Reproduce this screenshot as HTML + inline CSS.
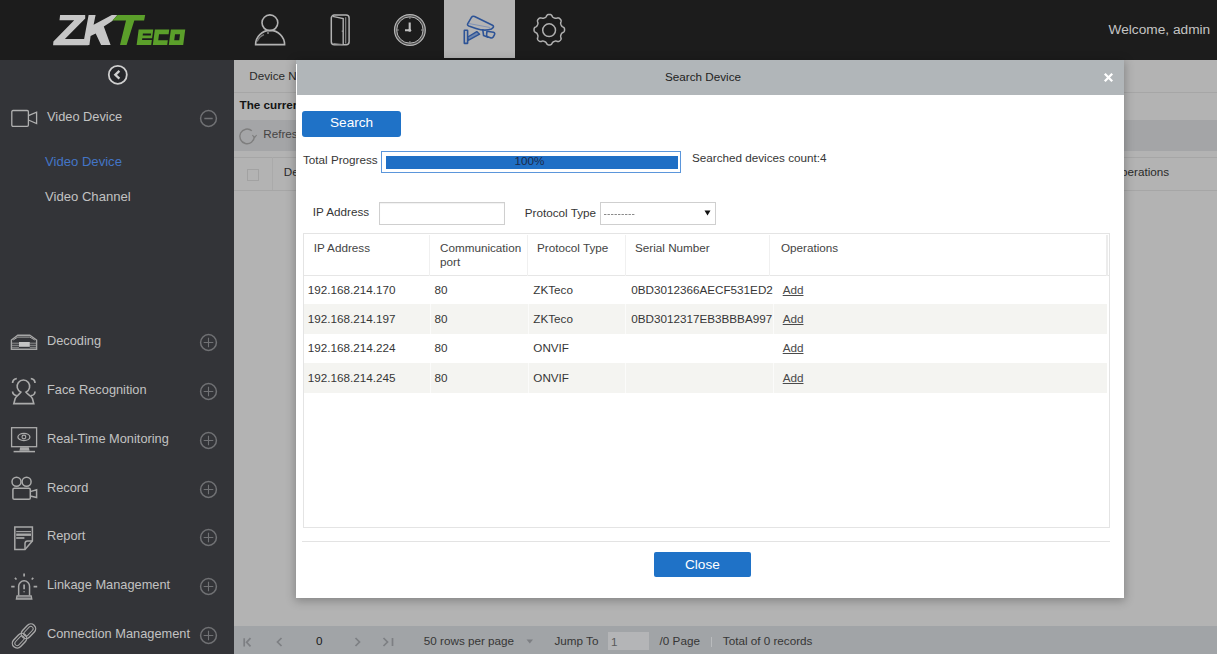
<!DOCTYPE html>
<html><head><meta charset="utf-8">
<style>
*{margin:0;padding:0;box-sizing:border-box}
html,body{width:1217px;height:654px;overflow:hidden;background:#b3b3b3;font-family:"Liberation Sans",sans-serif;position:relative}
.abs{position:absolute}
.t{position:absolute;white-space:nowrap;line-height:1}
svg{position:absolute;overflow:visible}
#hdr{left:0;top:0;width:1217px;height:60px;background:#1c1c1c}
#side{left:0;top:60px;width:234px;height:594px;background:#333438}
#main{left:234px;top:60px;width:983px;height:594px;background:#b3b3b3}
#dlg{left:296px;top:60px;width:828px;height:537.5px;background:#fff;box-shadow:0 2px 9px 1px rgba(0,0,0,0.26)}
#dhead{left:0;top:0;width:828px;height:35px;background:#b1b6b9}
.sl{font-size:12.8px;color:#cdcdcd}
.d12{font-size:11.7px;color:#222}
</style></head>
<body>
<!-- HEADER -->
<div id="hdr" class="abs">
  <svg width="1217" height="60" style="left:0;top:0">
    <g fill="#c6c6c6">
      <polygon points="60.1,14.9 85.2,14.9 85.2,18.5 64.9,39.1 89.2,39.1 88.3,45.2 53.1,45.2 53.4,41.6 74.2,20.3 59.5,20.3"/>
      <polygon points="88.6,14.9 95.6,14.9 93.6,24.8 111.8,14.9 117.3,14.9 112.3,21 103.8,26.5 110.6,45.1 101.1,45.1 95.7,33.4 90.6,36 89.4,45.1 83,45.1"/>
    </g>
    <g fill="#5b9f2a">
      <polygon points="117.6,14.9 145.2,14.9 144.1,20.5 134.3,20.5 126.6,44.9 120,44.9 126,20.5 112.3,20.5"/>
      <g transform="translate(0,45) skewX(-7.5) translate(0,-45)" fill-rule="evenodd">
        <path d="M136.6,29.4H151.2V38.3H141.4V40H151.2V44.9H136.6Z M141.4,33.6V35.5H149.6V33.6Z"/>
        <path d="M152.8,29.4H167.2V34.2H157.6V40.2H167.2V44.9H152.8Z"/>
        <path d="M168.8,29.4H183.2V44.9H168.8Z M173.6,34.2V40.2H178.6V34.2Z"/>
      </g>
    </g>
  </svg>
  <!-- person -->
  <svg width="40" height="40" style="left:250px;top:10px" fill="none" stroke="#b2b2b2" stroke-width="1.6">
    <circle cx="19.9" cy="12.8" r="7.9"/>
    <path d="M5.6,34.6 A14.5,14.2 0 0 1 34.6,34.6 Z"/>
    <path d="M7.2,31.5 A12.5,12 0 0 1 14,24.6" stroke-width="1.3" stroke="#7a7a7a"/>
    <circle cx="18" cy="22.9" r="1" fill="#8a8a8a" stroke="none"/>
  </svg>
  <!-- door -->
  <svg width="30" height="40" style="left:325px;top:10px" fill="none" stroke="#b2b2b2" stroke-width="1.5">
    <rect x="6.3" y="5.1" width="17.8" height="29.6" rx="3"/>
    <path d="M7.6,6.4 L18.2,8.6 V34.2" stroke-width="1.4"/>
    <path d="M20.7,7.2 V33.4" stroke-width="1.1" stroke="#8c8c8c"/>
    <path d="M8.4,33.6 L17.6,34.6" stroke-width="1.1" stroke="#8c8c8c"/>
    <circle cx="17.3" cy="21.1" r="0.7" fill="#b2b2b2" stroke="none"/>
  </svg>
  <!-- clock -->
  <svg width="40" height="40" style="left:390px;top:10px" fill="none" stroke="#b4b4b4">
    <circle cx="19.9" cy="20" r="14.3" stroke-width="2.4" stroke="#505050"/>
    <circle cx="19.9" cy="20" r="15.4" stroke-width="1.2"/>
    <circle cx="19.9" cy="20" r="13.2" stroke-width="1"/>
    <path d="M19.7,12.6 V20.3 H15" stroke-width="2.1" stroke="#c0c0c0"/>
    <circle cx="19.7" cy="20.3" r="1.5" fill="#c0c0c0" stroke="none"/>
    <path d="M19.9,7.2V8.8 M19.9,31.2V32.8 M7.1,20H8.7 M31.1,20H32.7" stroke-width="1.1"/>
  </svg>
  <div class="abs" style="left:444px;top:0;width:71px;height:58px;background:#b4b4b4"></div>
  <!-- camera -->
  <svg width="44" height="40" style="left:458px;top:10px" fill="none" stroke="#2d5396" stroke-width="1.6" stroke-linejoin="round" stroke-linecap="round">
    <rect x="6.3" y="20.2" width="3.3" height="13.2" rx="0.4"/>
    <path d="M9.8,27 L18.8,21.6 L21.6,24.2 L10.2,30.4 Z" fill="#6f86ad" stroke-width="1.4"/>
    <path d="M13.6,7.2 C14.3,6.2 15.5,6.1 16.6,6.6 L34.5,15.2 C35.6,15.8 35.8,16.8 35,17.6 L33.5,19 C29,20.6 23,20.2 18,18.4 L10.8,16 C9.5,15.5 9.2,14.6 9.8,13.6 Z"/>
    <path d="M11.2,13.6 L31.5,17.4" stroke-width="0.9" stroke="#7b8fb5"/>
    <path d="M24.8,19.8 L25.6,25.6 L30,27.2"/>
    <path d="M29,21.2 L35.4,22.3 C36.7,22.7 37.1,23.7 36.4,24.9 L35.2,27 C34.4,28 33.4,28.2 32.4,27.8 L29.6,26.8 C28.6,26.3 28.4,25.4 28.6,24.4 Z"/>
  </svg>
  <!-- gear -->
  <svg width="40" height="40" style="left:529px;top:10px" fill="none" stroke="#b0b0b0" stroke-width="1.5" stroke-linejoin="round">
    <path d="M35.55,19.70 L35.54,20.10 L35.50,20.50 L35.42,20.89 L35.29,21.28 L35.07,21.64 L34.74,21.99 L34.29,22.29 L33.77,22.56 L33.31,22.82 L32.95,23.09 L32.70,23.37 L32.51,23.67 L32.35,23.97 L32.21,24.27 L32.08,24.58 L31.95,24.89 L31.84,25.20 L31.73,25.53 L31.66,25.87 L31.64,26.25 L31.71,26.69 L31.85,27.20 L32.02,27.76 L32.13,28.29 L32.12,28.77 L32.01,29.18 L31.83,29.55 L31.61,29.88 L31.36,30.19 L31.08,30.48 L30.79,30.76 L30.48,31.01 L30.15,31.23 L29.78,31.41 L29.37,31.52 L28.89,31.53 L28.36,31.42 L27.80,31.25 L27.29,31.11 L26.85,31.04 L26.47,31.06 L26.13,31.13 L25.80,31.24 L25.49,31.35 L25.18,31.48 L24.87,31.61 L24.57,31.75 L24.27,31.91 L23.97,32.10 L23.69,32.35 L23.42,32.71 L23.16,33.17 L22.89,33.69 L22.59,34.14 L22.24,34.47 L21.88,34.69 L21.49,34.82 L21.10,34.90 L20.70,34.94 L20.30,34.95 L19.90,34.94 L19.50,34.90 L19.11,34.82 L18.72,34.69 L18.36,34.47 L18.01,34.14 L17.71,33.69 L17.44,33.17 L17.18,32.71 L16.91,32.35 L16.63,32.10 L16.33,31.91 L16.03,31.75 L15.73,31.61 L15.42,31.48 L15.11,31.35 L14.80,31.24 L14.47,31.13 L14.13,31.06 L13.75,31.04 L13.31,31.11 L12.80,31.25 L12.24,31.42 L11.71,31.53 L11.23,31.52 L10.82,31.41 L10.45,31.23 L10.12,31.01 L9.81,30.76 L9.52,30.48 L9.24,30.19 L8.99,29.88 L8.77,29.55 L8.59,29.18 L8.48,28.77 L8.47,28.29 L8.58,27.76 L8.75,27.20 L8.89,26.69 L8.96,26.25 L8.94,25.87 L8.87,25.53 L8.76,25.20 L8.65,24.89 L8.52,24.58 L8.39,24.27 L8.25,23.97 L8.09,23.67 L7.90,23.37 L7.65,23.09 L7.29,22.82 L6.83,22.56 L6.31,22.29 L5.86,21.99 L5.53,21.64 L5.31,21.28 L5.18,20.89 L5.10,20.50 L5.06,20.10 L5.05,19.70 L5.06,19.30 L5.10,18.90 L5.18,18.51 L5.31,18.12 L5.53,17.76 L5.86,17.41 L6.31,17.11 L6.83,16.84 L7.29,16.58 L7.65,16.31 L7.90,16.03 L8.09,15.73 L8.25,15.43 L8.39,15.13 L8.52,14.82 L8.65,14.51 L8.76,14.20 L8.87,13.87 L8.94,13.53 L8.96,13.15 L8.89,12.71 L8.75,12.20 L8.58,11.64 L8.47,11.11 L8.48,10.63 L8.59,10.22 L8.77,9.85 L8.99,9.52 L9.24,9.21 L9.52,8.92 L9.81,8.64 L10.12,8.39 L10.45,8.17 L10.82,7.99 L11.23,7.88 L11.71,7.87 L12.24,7.98 L12.80,8.15 L13.31,8.29 L13.75,8.36 L14.13,8.34 L14.47,8.27 L14.80,8.16 L15.11,8.05 L15.42,7.92 L15.73,7.79 L16.03,7.65 L16.33,7.49 L16.63,7.30 L16.91,7.05 L17.18,6.69 L17.44,6.23 L17.71,5.71 L18.01,5.26 L18.36,4.93 L18.72,4.71 L19.11,4.58 L19.50,4.50 L19.90,4.46 L20.30,4.45 L20.70,4.46 L21.10,4.50 L21.49,4.58 L21.88,4.71 L22.24,4.93 L22.59,5.26 L22.89,5.71 L23.16,6.23 L23.42,6.69 L23.69,7.05 L23.97,7.30 L24.27,7.49 L24.57,7.65 L24.87,7.79 L25.18,7.92 L25.49,8.05 L25.80,8.16 L26.13,8.27 L26.47,8.34 L26.85,8.36 L27.29,8.29 L27.80,8.15 L28.36,7.98 L28.89,7.87 L29.37,7.88 L29.78,7.99 L30.15,8.17 L30.48,8.39 L30.79,8.64 L31.08,8.92 L31.36,9.21 L31.61,9.52 L31.83,9.85 L32.01,10.22 L32.12,10.63 L32.13,11.11 L32.02,11.64 L31.85,12.20 L31.71,12.71 L31.64,13.15 L31.66,13.53 L31.73,13.87 L31.84,14.20 L31.95,14.51 L32.08,14.82 L32.21,15.13 L32.35,15.43 L32.51,15.73 L32.70,16.03 L32.95,16.31 L33.31,16.58 L33.77,16.84 L34.29,17.11 L34.74,17.41 L35.07,17.76 L35.29,18.12 L35.42,18.51 L35.50,18.90 L35.54,19.30Z"/>
    <circle cx="20.1" cy="20.2" r="6.4"/>
  </svg>
  <div class="t" style="left:1108.5px;top:22.8px;font-size:13.7px;color:#c4c4c4">Welcome, admin</div>
</div>
<!-- <svg width="24" height="24" style="left:106px;top:3.2px" fill="none" stroke="#cfcfcf" stroke-width="1.8">
 <circle cx="11.8" cy="11.8" r="9" fill="#26272b"/><path d="M13.4,7.9 L9.3,11.8 L13.4,15.7" stroke-width="2.3"/></svg>
  <svg width="30" height="22" style="left:10px;top:49px" fill="none" stroke="#b0b0b0" stroke-width="1.3">
 <rect x="1.8" y="1.5" width="16.6" height="15.8" rx="1.2"/><path d="M18.4,6.6 L26.6,3.2 V14.6 L18.4,11"/></svg>
  <svg width="19" height="19" style="left:199px;top:48.50px" fill="none" stroke="#707174" stroke-width="1.5"><circle cx="9.5" cy="9.5" r="7.9"/><path d="M5.3,9.5H13.7"/></svg>
  <svg width="19" height="19" style="left:199px;top:273.00px" fill="none" stroke="#707174" stroke-width="1.5"><circle cx="9.5" cy="9.5" r="7.9"/><path d="M4.7,9.5H14.3 M9.5,4.7V14.3" stroke-width="1.1"/></svg>
  <svg width="19" height="19" style="left:199px;top:321.85px" fill="none" stroke="#707174" stroke-width="1.5"><circle cx="9.5" cy="9.5" r="7.9"/><path d="M4.7,9.5H14.3 M9.5,4.7V14.3" stroke-width="1.1"/></svg>
  <svg width="19" height="19" style="left:199px;top:370.70px" fill="none" stroke="#707174" stroke-width="1.5"><circle cx="9.5" cy="9.5" r="7.9"/><path d="M4.7,9.5H14.3 M9.5,4.7V14.3" stroke-width="1.1"/></svg>
  <svg width="19" height="19" style="left:199px;top:419.55px" fill="none" stroke="#707174" stroke-width="1.5"><circle cx="9.5" cy="9.5" r="7.9"/><path d="M4.7,9.5H14.3 M9.5,4.7V14.3" stroke-width="1.1"/></svg>
  <svg width="19" height="19" style="left:199px;top:468.40px" fill="none" stroke="#707174" stroke-width="1.5"><circle cx="9.5" cy="9.5" r="7.9"/><path d="M4.7,9.5H14.3 M9.5,4.7V14.3" stroke-width="1.1"/></svg>
  <svg width="19" height="19" style="left:199px;top:517.25px" fill="none" stroke="#707174" stroke-width="1.5"><circle cx="9.5" cy="9.5" r="7.9"/><path d="M4.7,9.5H14.3 M9.5,4.7V14.3" stroke-width="1.1"/></svg>
  <svg width="19" height="19" style="left:199px;top:566.10px" fill="none" stroke="#707174" stroke-width="1.5"><circle cx="9.5" cy="9.5" r="7.9"/><path d="M4.7,9.5H14.3 M9.5,4.7V14.3" stroke-width="1.1"/></svg>
  <div class="t sl" style="left:47px;top:51.1px;color:#c2c2c2">Video Device</div>
  <div class="t sl" style="left:45px;top:95.1px;color:#4375c6;font-size:13.1px">Video Device</div>
  <div class="t sl" style="left:45px;top:130.1px;color:#c2c2c2;font-size:13.1px">Video Channel</div>
  <div class="t sl" style="left:47px;top:275.1px;color:#c2c2c2">Decoding</div>
  <div class="t sl" style="left:47px;top:323.9px;color:#c2c2c2">Face Recognition</div>
  <div class="t sl" style="left:47px;top:372.7px;color:#c2c2c2">Real-Time Monitoring</div>
  <div class="t sl" style="left:47px;top:421.5px;color:#c2c2c2">Record</div>
  <div class="t sl" style="left:47px;top:470.3px;color:#c2c2c2">Report</div>
  <div class="t sl" style="left:47px;top:519.1px;color:#c2c2c2">Linkage Management</div>
  <div class="t sl" style="left:47px;top:567.9px;color:#c2c2c2">Connection Management</div>
  <svg width="30" height="20" style="left:10px;top:273px" fill="none" stroke="#a6a6a6" stroke-width="1.3" ><path d="M7.8,2.2 H19.8 L26.6,7 V16.3 H1.4 V7 Z" stroke-width="1.4"/><path d="M3.2,7 L7.8,4.1 H19.8 L24.8,7" stroke-width="1"/><path d="M1.4,10.2H9 M19.8,10.2H26.6 M1.4,12.3H9 M19.8,12.3H26.6 M1.4,14.3H9 M19.8,14.3H26.6" stroke-width="0.8"/><rect x="9" y="9" width="10.8" height="4.8" fill="#c4c4c4" stroke="none"/></svg>
  <svg width="30" height="30" style="left:10px;top:316px" fill="none" stroke="#ababab" stroke-width="1.3" ><path d="M2.6,7 A4.2,4.2 0 0 1 6.8,2.6 M20.8,2.6 A4.2,4.2 0 0 1 25,7 M2.6,15.4 A4.2,4.2 0 0 0 6.8,19.6 M25,15.4 A4.2,4.2 0 0 1 20.8,19.6" stroke-width="1.7"/><path d="M10.9,16.2 A6.3,6.4 0 1 1 15.9,16.2 C17.4,18.6 21.3,19.6 22.4,22.5 L23.8,27.6 H3.8 L5.2,22.5 C6.3,19.6 9.4,18.6 10.9,16.2 Z" stroke-width="1.6"/></svg>
  <svg width="30" height="30" style="left:10px;top:365px" fill="none" stroke="#ababab" stroke-width="1.3" ><rect x="1.6" y="2.7" width="25" height="19"/><polygon points="10.2,22.2 18.8,22.2 19.6,25.8 9.4,25.8" fill="#a8a8a8" stroke="none"/><path d="M3.6,26.6 H25" stroke-width="1.5"/><ellipse cx="13.9" cy="12" rx="6" ry="3.6" stroke-width="1.3"/><circle cx="13.9" cy="12" r="1.9" stroke-width="1.1"/></svg>
  <svg width="30" height="33" style="left:10px;top:410px" fill="none" stroke="#ababab" stroke-width="1.5" ><circle cx="6.5" cy="11.7" r="4.5"/><circle cx="16.6" cy="11.7" r="4.5"/><rect x="2.9" y="18.3" width="17.4" height="11" rx="1.4"/><path d="M20.3,21.6 L26.6,19.8 V27.6 L20.3,26"/></svg>
  <svg width="28" height="30" style="left:10px;top:463px" fill="none" stroke="#a8a8a8" stroke-width="1.5" ><path d="M4.8,4 H22.4 V18 L15,26.6 H4.8 Z"/><path d="M15,26.6 V20.6 Q15,18 17.6,18 H22.4"/><path d="M6.2,8.6 H21" stroke-width="1.1"/><path d="M6.2,11.7 H21" stroke-width="2.4"/><path d="M6.2,15 H14.4" stroke-width="1.7"/></svg>
  <svg width="32" height="30" style="left:9px;top:512px" fill="none" stroke="#a8a8a8" stroke-width="1.5" ><path d="M9.65,23.6 V14.3 A5.45,5.45 0 0 1 20.55,14.3 V23.6"/><path d="M7.4,27 H22.8 L22.2,23.8 H8 Z" fill="#6a6b6e" stroke-width="1.3"/><path d="M15.1,12.6 V17.2" stroke-width="1.7"/><path d="M15.1,19.2 V20.2" stroke-width="1.5"/><path d="M15.1,1.6 V4.6 M5.9,5.9 L7.5,7.5 M24.3,5.9 L22.7,7.5 M2.2,14.7 H5.6 M24.6,14.7 H28.2" stroke-width="1.7"/></svg>
  <svg width="32" height="32" style="left:8.2px;top:559.5px" fill="none" stroke="#a8a8a8" stroke-width="1.3" ><g transform="rotate(-47 16 16)"><rect x="1.2" y="11.2" width="16.6" height="9.6" rx="4.8" stroke-width="1.4"/><rect x="14.2" y="11.2" width="16.6" height="9.6" rx="4.8" stroke-width="1.4"/><rect x="3.7" y="13.7" width="11.6" height="4.6" rx="2.3" stroke-width="1"/><rect x="16.7" y="13.7" width="11.6" height="4.6" rx="2.3" stroke-width="1"/></g></svg> -->
<div id="side" class="abs">
  <svg width="24" height="24" style="left:106px;top:3.2px" fill="none" stroke="#cfcfcf" stroke-width="1.8">
 <circle cx="11.8" cy="11.8" r="9" fill="#26272b"/><path d="M13.4,7.9 L9.3,11.8 L13.4,15.7" stroke-width="2.3"/></svg>
  <svg width="30" height="22" style="left:10px;top:49px" fill="none" stroke="#b0b0b0" stroke-width="1.3">
 <rect x="1.8" y="1.5" width="16.6" height="15.8" rx="1.2"/><path d="M18.4,6.6 L26.6,3.2 V14.6 L18.4,11"/></svg>
  <svg width="19" height="19" style="left:199px;top:48.50px" fill="none" stroke="#707174" stroke-width="1.5"><circle cx="9.5" cy="9.5" r="7.9"/><path d="M5.3,9.5H13.7"/></svg>
  <svg width="19" height="19" style="left:199px;top:273.00px" fill="none" stroke="#707174" stroke-width="1.5"><circle cx="9.5" cy="9.5" r="7.9"/><path d="M4.7,9.5H14.3 M9.5,4.7V14.3" stroke-width="1.1"/></svg>
  <svg width="19" height="19" style="left:199px;top:321.85px" fill="none" stroke="#707174" stroke-width="1.5"><circle cx="9.5" cy="9.5" r="7.9"/><path d="M4.7,9.5H14.3 M9.5,4.7V14.3" stroke-width="1.1"/></svg>
  <svg width="19" height="19" style="left:199px;top:370.70px" fill="none" stroke="#707174" stroke-width="1.5"><circle cx="9.5" cy="9.5" r="7.9"/><path d="M4.7,9.5H14.3 M9.5,4.7V14.3" stroke-width="1.1"/></svg>
  <svg width="19" height="19" style="left:199px;top:419.55px" fill="none" stroke="#707174" stroke-width="1.5"><circle cx="9.5" cy="9.5" r="7.9"/><path d="M4.7,9.5H14.3 M9.5,4.7V14.3" stroke-width="1.1"/></svg>
  <svg width="19" height="19" style="left:199px;top:468.40px" fill="none" stroke="#707174" stroke-width="1.5"><circle cx="9.5" cy="9.5" r="7.9"/><path d="M4.7,9.5H14.3 M9.5,4.7V14.3" stroke-width="1.1"/></svg>
  <svg width="19" height="19" style="left:199px;top:517.25px" fill="none" stroke="#707174" stroke-width="1.5"><circle cx="9.5" cy="9.5" r="7.9"/><path d="M4.7,9.5H14.3 M9.5,4.7V14.3" stroke-width="1.1"/></svg>
  <svg width="19" height="19" style="left:199px;top:566.10px" fill="none" stroke="#707174" stroke-width="1.5"><circle cx="9.5" cy="9.5" r="7.9"/><path d="M4.7,9.5H14.3 M9.5,4.7V14.3" stroke-width="1.1"/></svg>
  <div class="t sl" style="left:47px;top:51.1px;color:#c2c2c2">Video Device</div>
  <div class="t sl" style="left:45px;top:95.1px;color:#4375c6;font-size:13.1px">Video Device</div>
  <div class="t sl" style="left:45px;top:130.1px;color:#c2c2c2;font-size:13.1px">Video Channel</div>
  <div class="t sl" style="left:47px;top:275.1px;color:#c2c2c2">Decoding</div>
  <div class="t sl" style="left:47px;top:323.9px;color:#c2c2c2">Face Recognition</div>
  <div class="t sl" style="left:47px;top:372.7px;color:#c2c2c2">Real-Time Monitoring</div>
  <div class="t sl" style="left:47px;top:421.5px;color:#c2c2c2">Record</div>
  <div class="t sl" style="left:47px;top:470.3px;color:#c2c2c2">Report</div>
  <div class="t sl" style="left:47px;top:519.1px;color:#c2c2c2">Linkage Management</div>
  <div class="t sl" style="left:47px;top:567.9px;color:#c2c2c2">Connection Management</div>
  <svg width="30" height="20" style="left:10px;top:273px" fill="none" stroke="#a6a6a6" stroke-width="1.3" ><path d="M7.8,2.2 H19.8 L26.6,7 V16.3 H1.4 V7 Z" stroke-width="1.4"/><path d="M3.2,7 L7.8,4.1 H19.8 L24.8,7" stroke-width="1"/><path d="M1.4,10.2H9 M19.8,10.2H26.6 M1.4,12.3H9 M19.8,12.3H26.6 M1.4,14.3H9 M19.8,14.3H26.6" stroke-width="0.8"/><rect x="9" y="9" width="10.8" height="4.8" fill="#c4c4c4" stroke="none"/></svg>
  <svg width="30" height="30" style="left:10px;top:316px" fill="none" stroke="#ababab" stroke-width="1.3" ><path d="M2.6,7 A4.2,4.2 0 0 1 6.8,2.6 M20.8,2.6 A4.2,4.2 0 0 1 25,7 M2.6,15.4 A4.2,4.2 0 0 0 6.8,19.6 M25,15.4 A4.2,4.2 0 0 1 20.8,19.6" stroke-width="1.7"/><path d="M10.9,16.2 A6.3,6.4 0 1 1 15.9,16.2 C17.4,18.6 21.3,19.6 22.4,22.5 L23.8,27.6 H3.8 L5.2,22.5 C6.3,19.6 9.4,18.6 10.9,16.2 Z" stroke-width="1.6"/></svg>
  <svg width="30" height="30" style="left:10px;top:365px" fill="none" stroke="#ababab" stroke-width="1.3" ><rect x="1.6" y="2.7" width="25" height="19"/><polygon points="10.2,22.2 18.8,22.2 19.6,25.8 9.4,25.8" fill="#a8a8a8" stroke="none"/><path d="M3.6,26.6 H25" stroke-width="1.5"/><ellipse cx="13.9" cy="12" rx="6" ry="3.6" stroke-width="1.3"/><circle cx="13.9" cy="12" r="1.9" stroke-width="1.1"/></svg>
  <svg width="30" height="33" style="left:10px;top:410px" fill="none" stroke="#ababab" stroke-width="1.5" ><circle cx="6.5" cy="11.7" r="4.5"/><circle cx="16.6" cy="11.7" r="4.5"/><rect x="2.9" y="18.3" width="17.4" height="11" rx="1.4"/><path d="M20.3,21.6 L26.6,19.8 V27.6 L20.3,26"/></svg>
  <svg width="28" height="30" style="left:10px;top:463px" fill="none" stroke="#a8a8a8" stroke-width="1.5" ><path d="M4.8,4 H22.4 V18 L15,26.6 H4.8 Z"/><path d="M15,26.6 V20.6 Q15,18 17.6,18 H22.4"/><path d="M6.2,8.6 H21" stroke-width="1.1"/><path d="M6.2,11.7 H21" stroke-width="2.4"/><path d="M6.2,15 H14.4" stroke-width="1.7"/></svg>
  <svg width="32" height="30" style="left:9px;top:512px" fill="none" stroke="#a8a8a8" stroke-width="1.5" ><path d="M9.65,23.6 V14.3 A5.45,5.45 0 0 1 20.55,14.3 V23.6"/><path d="M7.4,27 H22.8 L22.2,23.8 H8 Z" fill="#6a6b6e" stroke-width="1.3"/><path d="M15.1,12.6 V17.2" stroke-width="1.7"/><path d="M15.1,19.2 V20.2" stroke-width="1.5"/><path d="M15.1,1.6 V4.6 M5.9,5.9 L7.5,7.5 M24.3,5.9 L22.7,7.5 M2.2,14.7 H5.6 M24.6,14.7 H28.2" stroke-width="1.7"/></svg>
  <svg width="32" height="32" style="left:8.2px;top:559.5px" fill="none" stroke="#a8a8a8" stroke-width="1.3" ><g transform="rotate(-47 16 16)"><rect x="1.2" y="11.2" width="16.6" height="9.6" rx="4.8" stroke-width="1.4"/><rect x="14.2" y="11.2" width="16.6" height="9.6" rx="4.8" stroke-width="1.4"/><rect x="3.7" y="13.7" width="11.6" height="4.6" rx="2.3" stroke-width="1"/><rect x="16.7" y="13.7" width="11.6" height="4.6" rx="2.3" stroke-width="1"/></g></svg>
</div>
<!-- <div class="abs" style="left:0px;top:32px;width:983px;height:1px;background:#a6a6a6"></div>
  <div class="t" style="left:15.300000000000011px;top:9.5px;font-size:11.7px;color:#2a2a2a">Device Name</div>
  <div class="t" style="left:5.599999999999994px;top:38.5px;font-size:11.7px;font-weight:bold;color:#141414">The current</div>
  <div class="abs" style="left:0px;top:60px;width:983px;height:31px;background:#a4a5a7"></div>
  <svg width="20" height="20" style="left:3.1999999999999886px;top:66px" fill="none" stroke="#7e7e7e" stroke-width="1.4"><path d="M14.8,4.8 A7.3,7.3 0 1 0 17.4,10.6"/><path d="M15.4,9.2 L17.6,11.6 L19.6,9" stroke-width="1.2"/></svg>
  <div class="t" style="left:29.19999999999999px;top:67.5px;font-size:11.7px;color:#444">Refresh</div>
  <div class="abs" style="left:0px;top:97px;width:983px;height:1px;background:#a6a6a6"></div>
  <div class="abs" style="left:12.800000000000011px;top:108.80000000000001px;width:12.4px;height:12.4px;border:1.2px solid #a2a2a2"></div>
  <div class="abs" style="left:38px;top:97px;width:1px;height:33px;background:#aaaaaa"></div>
  <div class="t" style="left:49.80000000000001px;top:106.19999999999999px;font-size:11.7px;color:#2a2a2a">Device</div>
  <div class="t" style="left:878px;top:106.19999999999999px;font-size:11.7px;color:#2a2a2a">Operations</div>
  <div class="abs" style="left:0px;top:130px;width:983px;height:1px;background:#a6a6a6"></div>
  <div class="abs" style="left:0px;top:566px;width:983px;height:28px;background:#a1a4a7"></div>
  <svg width="200" height="28" style="left:0px;top:566px" fill="none" stroke="#7d7f83" stroke-width="1.7"><path d="M10.2,12.2 V20.4 M16.5,12.2 L12.6,16.3 L16.5,20.4"/><path d="M47.5,12 L43.5,16 L47.5,20"/><path d="M121.5,12 L125.5,16 L121.5,20"/><path d="M149.5,12 L153.5,16 L149.5,20 M158.5,12 V20"/></svg>
  <div class="t" style="left:82px;top:574.5px;font-size:11.7px;color:#1a1a1a">0</div>
  <div class="t" style="left:189.8px;top:575px;font-size:11.7px;color:#363636">50 rows per page</div>
  <svg width="8" height="6" style="left:292px;top:579px"><path d="M0.5,0.5 H7 L3.75,4.5Z" fill="#7d7f83"/></svg>
  <div class="t" style="left:320.5px;top:574.5px;font-size:11.7px;color:#363636">Jump To</div>
  <div class="abs" style="left:374px;top:571.6px;width:41px;height:18.5px;background:#b4b5b7"></div>
  <div class="t" style="left:377px;top:575.5px;font-size:11.7px;color:#5a5a5a">1</div>
  <div class="t" style="left:425.6px;top:574.5px;font-size:11.7px;color:#363636">/0 Page</div>
  <div class="abs" style="left:477px;top:577px;width:1px;height:10px;background:#b9bbbd"></div>
  <div class="t" style="left:488.79999999999995px;top:574.5px;font-size:11.7px;color:#363636">Total of 0 records</div> (behind overlay) -->
<div id="main" class="abs">
  <div class="abs" style="left:0px;top:32px;width:983px;height:1px;background:#a6a6a6"></div>
  <div class="t" style="left:15.300000000000011px;top:9.5px;font-size:11.7px;color:#2a2a2a">Device Name</div>
  <div class="t" style="left:5.599999999999994px;top:38.5px;font-size:11.7px;font-weight:bold;color:#141414">The current</div>
  <div class="abs" style="left:0px;top:60px;width:983px;height:31px;background:#a4a5a7"></div>
  <svg width="20" height="20" style="left:3.1999999999999886px;top:66px" fill="none" stroke="#7e7e7e" stroke-width="1.4"><path d="M14.8,4.8 A7.3,7.3 0 1 0 17.4,10.6"/><path d="M15.4,9.2 L17.6,11.6 L19.6,9" stroke-width="1.2"/></svg>
  <div class="t" style="left:29.19999999999999px;top:67.5px;font-size:11.7px;color:#444">Refresh</div>
  <div class="abs" style="left:0px;top:97px;width:983px;height:1px;background:#a6a6a6"></div>
  <div class="abs" style="left:12.800000000000011px;top:108.80000000000001px;width:12.4px;height:12.4px;border:1.2px solid #a2a2a2"></div>
  <div class="abs" style="left:38px;top:97px;width:1px;height:33px;background:#aaaaaa"></div>
  <div class="t" style="left:49.80000000000001px;top:106.19999999999999px;font-size:11.7px;color:#2a2a2a">Device</div>
  <div class="t" style="left:878px;top:106.19999999999999px;font-size:11.7px;color:#2a2a2a">Operations</div>
  <div class="abs" style="left:0px;top:130px;width:983px;height:1px;background:#a6a6a6"></div>
  <div class="abs" style="left:0px;top:566px;width:983px;height:28px;background:#a1a4a7"></div>
  <svg width="200" height="28" style="left:0px;top:566px" fill="none" stroke="#7d7f83" stroke-width="1.7"><path d="M10.2,12.2 V20.4 M16.5,12.2 L12.6,16.3 L16.5,20.4"/><path d="M47.5,12 L43.5,16 L47.5,20"/><path d="M121.5,12 L125.5,16 L121.5,20"/><path d="M149.5,12 L153.5,16 L149.5,20 M158.5,12 V20"/></svg>
  <div class="t" style="left:82px;top:574.5px;font-size:11.7px;color:#1a1a1a">0</div>
  <div class="t" style="left:189.8px;top:575px;font-size:11.7px;color:#363636">50 rows per page</div>
  <svg width="8" height="6" style="left:292px;top:579px"><path d="M0.5,0.5 H7 L3.75,4.5Z" fill="#7d7f83"/></svg>
  <div class="t" style="left:320.5px;top:574.5px;font-size:11.7px;color:#363636">Jump To</div>
  <div class="abs" style="left:374px;top:571.6px;width:41px;height:18.5px;background:#b4b5b7"></div>
  <div class="t" style="left:377px;top:575.5px;font-size:11.7px;color:#5a5a5a">1</div>
  <div class="t" style="left:425.6px;top:574.5px;font-size:11.7px;color:#363636">/0 Page</div>
  <div class="abs" style="left:477px;top:577px;width:1px;height:10px;background:#b9bbbd"></div>
  <div class="t" style="left:488.79999999999995px;top:574.5px;font-size:11.7px;color:#363636">Total of 0 records</div>
</div>
<div id="dlg" class="abs">
  <div id="dhead" class="abs"></div>
  <div class="abs" style="left:0.0px;top:4.0px;width:1px;height:534px;background:#fff"></div>
  <div class="t" style="left:369.0px;top:11.2px;font-size:11.7px;color:#1e1e1e">Search Device</div>
  <svg width="12" height="12" style="left:807px;top:12px" stroke="#fff" stroke-width="2.3"><path d="M1.8,1.8 L9.2,9.2 M9.2,1.8 L1.8,9.2"/></svg>
  <div class="abs" style="left:6.0px;top:51.0px;width:99px;height:26px;background:#1f72c7;border-radius:3px"></div>
  <div class="t" style="left:34.0px;top:56.3px;font-size:13.6px;color:#fff">Search</div>
  <div class="t" style="left:7.0px;top:93.5px;font-size:11.7px;color:#363636">Total Progress</div>
  <div class="abs" style="left:85.0px;top:90.6px;width:300px;height:22.4px;border:1px solid #5b96db"></div>
  <div class="abs" style="left:89.5px;top:95.6px;width:292px;height:13.2px;background:#1f6fc5"></div>
  <div class="t" style="left:218.6px;top:95.0px;font-size:11.7px;color:#1c2a48">100%</div>
  <div class="t" style="left:396.0px;top:91.8px;font-size:11.7px;color:#363636">Searched devices count:4</div>
  <div class="t" style="left:16.8px;top:145.5px;font-size:11.7px;color:#363636">IP Address</div>
  <div class="abs" style="left:83.0px;top:142.0px;width:126px;height:23px;border:1px solid #cfcfcf;box-shadow:inset 0 1px 1px rgba(0,0,0,0.06)"></div>
  <div class="t" style="left:228.8px;top:146.8px;font-size:11.7px;color:#363636">Protocol Type</div>
  <div class="abs" style="left:304.0px;top:142.0px;width:116px;height:23px;border:1px solid #cfcfcf"></div>
  <svg width="40" height="4" style="left:308.4px;top:152.5px"><path d="M0,1.5H31.5" stroke="#8a8a8a" stroke-width="1" stroke-dasharray="2.4,1.1"/></svg>
  <svg width="8" height="7" style="left:408px;top:150px"><path d="M0.5,0.5H6.5L3.5,5.5Z" fill="#111"/></svg>
  <div class="abs" style="left:7.0px;top:173.0px;width:807px;height:294.5px;border:1px solid #e4e4e4"></div>
  <div class="abs" style="left:8.0px;top:215.0px;width:805px;height:1.2px;background:#e6e6e6"></div>
  <div class="abs" style="left:810.0px;top:174.5px;width:2px;height:41px;background:#ececec"></div>
  <div class="abs" style="left:133.0px;top:174.5px;width:1px;height:41px;background:#f0f0f0"></div>
  <div class="abs" style="left:231.3px;top:174.5px;width:1px;height:41px;background:#f0f0f0"></div>
  <div class="abs" style="left:328.6px;top:174.5px;width:1px;height:41px;background:#f0f0f0"></div>
  <div class="abs" style="left:472.7px;top:174.5px;width:1px;height:41px;background:#f0f0f0"></div>
  <div class="abs" style="left:8.0px;top:244.0px;width:803px;height:30px;background:#f4f4f1"></div>
  <div class="abs" style="left:133.6px;top:244.0px;width:1px;height:30px;background:#fbfbfa"></div>
  <div class="abs" style="left:232.4px;top:244.0px;width:1px;height:30px;background:#fbfbfa"></div>
  <div class="abs" style="left:329.2px;top:244.0px;width:1px;height:30px;background:#fbfbfa"></div>
  <div class="abs" style="left:476.8px;top:244.0px;width:1px;height:30px;background:#fbfbfa"></div>
  <div class="abs" style="left:8.0px;top:303.0px;width:803px;height:29.5px;background:#f4f4f1"></div>
  <div class="abs" style="left:133.6px;top:303.0px;width:1px;height:29.5px;background:#fbfbfa"></div>
  <div class="abs" style="left:232.4px;top:303.0px;width:1px;height:29.5px;background:#fbfbfa"></div>
  <div class="abs" style="left:329.2px;top:303.0px;width:1px;height:29.5px;background:#fbfbfa"></div>
  <div class="abs" style="left:476.8px;top:303.0px;width:1px;height:29.5px;background:#fbfbfa"></div>
  <div class="t" style="left:17.7px;top:182.0px;font-size:11.7px;color:#444">IP Address</div>
  <div class="t" style="left:144px;top:181.3px;font-size:11.7px;color:#444;line-height:13.8px">Communication<br>port</div>
  <div class="t" style="left:241.0px;top:182.0px;font-size:11.7px;color:#444">Protocol Type</div>
  <div class="t" style="left:339.0px;top:182.0px;font-size:11.7px;color:#444">Serial Number</div>
  <div class="t" style="left:485.0px;top:182.0px;font-size:11.7px;color:#444">Operations</div>
  <div class="t" style="left:11.8px;top:223.5px;font-size:11.7px;color:#363636">192.168.214.170</div>
  <div class="t" style="left:138.6px;top:223.5px;font-size:11.7px;color:#363636">80</div>
  <div class="t" style="left:237.3px;top:223.5px;font-size:11.7px;color:#363636">ZKTeco</div>
  <div class="t" style="left:335.2px;top:223.5px;font-size:11.7px;color:#363636">0BD3012366AECF531ED2</div>
  <div class="t" style="left:486.7px;top:223.5px;font-size:11.7px;color:#4a4a4a;text-decoration:underline">Add</div>
  <div class="t" style="left:11.8px;top:252.5px;font-size:11.7px;color:#363636">192.168.214.197</div>
  <div class="t" style="left:138.6px;top:252.5px;font-size:11.7px;color:#363636">80</div>
  <div class="t" style="left:237.3px;top:252.5px;font-size:11.7px;color:#363636">ZKTeco</div>
  <div class="t" style="left:335.2px;top:252.5px;font-size:11.7px;color:#363636">0BD3012317EB3BBBA997</div>
  <div class="t" style="left:486.7px;top:252.5px;font-size:11.7px;color:#4a4a4a;text-decoration:underline">Add</div>
  <div class="t" style="left:11.8px;top:282.0px;font-size:11.7px;color:#363636">192.168.214.224</div>
  <div class="t" style="left:138.6px;top:282.0px;font-size:11.7px;color:#363636">80</div>
  <div class="t" style="left:237.3px;top:282.0px;font-size:11.7px;color:#363636">ONVIF</div>
  <div class="t" style="left:486.7px;top:282.0px;font-size:11.7px;color:#4a4a4a;text-decoration:underline">Add</div>
  <div class="t" style="left:11.8px;top:311.5px;font-size:11.7px;color:#363636">192.168.214.245</div>
  <div class="t" style="left:138.6px;top:311.5px;font-size:11.7px;color:#363636">80</div>
  <div class="t" style="left:237.3px;top:311.5px;font-size:11.7px;color:#363636">ONVIF</div>
  <div class="t" style="left:486.7px;top:311.5px;font-size:11.7px;color:#4a4a4a;text-decoration:underline">Add</div>
  <div class="abs" style="left:6.0px;top:481.4px;width:808px;height:1px;background:#e3e3e3"></div>
  <div class="abs" style="left:358.0px;top:492.0px;width:97px;height:25px;background:#1f72c7;border-radius:2px"></div>
  <div class="t" style="left:389.0px;top:497.6px;font-size:13.6px;color:#fff">Close</div>
</div>
</body></html>
